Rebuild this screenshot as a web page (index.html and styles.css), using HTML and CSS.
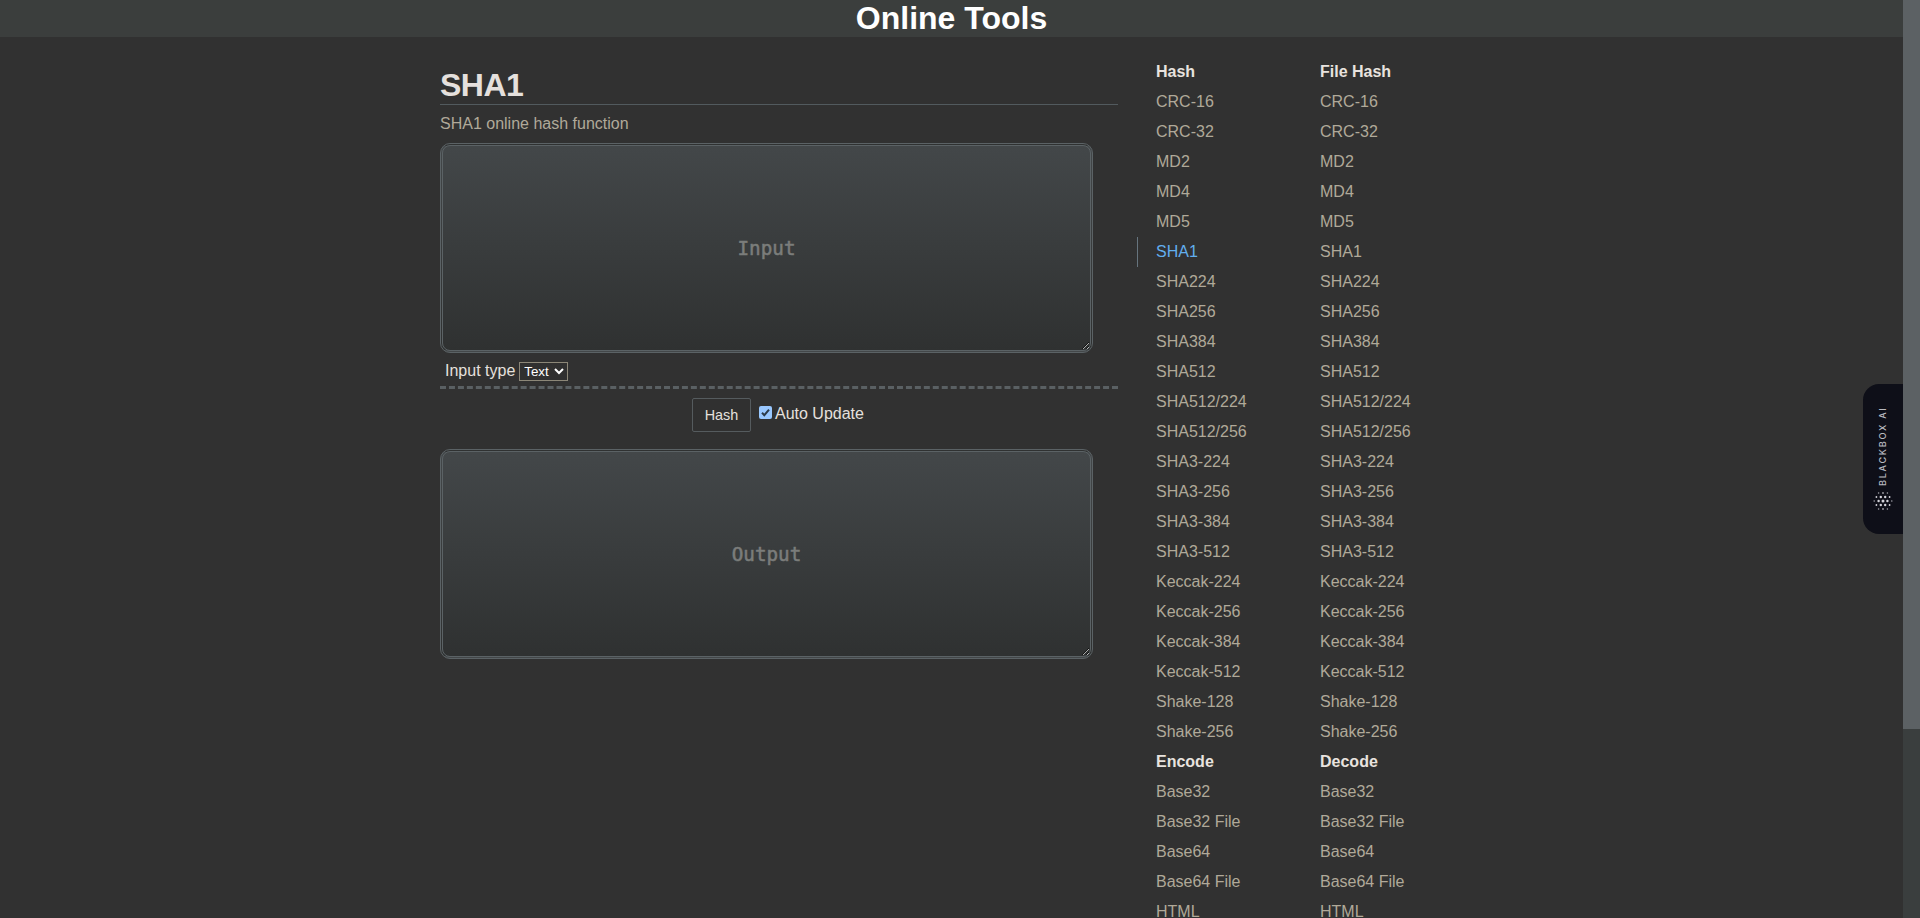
FILE: index.html
```html
<!DOCTYPE html>
<html lang="en">
<head>
<meta charset="utf-8">
<title>SHA1 - Online Tools</title>
<link rel="stylesheet" href="styles.css">
</head>
<body>
<div class="page">
  <div class="content">
    <header class="header">Online Tools</header>
    <div class="main">
      <main class="tool">
        <h1 class="title">SHA1</h1>
        <p class="description">SHA1 online hash function</p>
        <textarea class="box" placeholder="Input"></textarea>
        <div class="options">
          <label for="type">Input type</label>
          <select id="type" class="select"><option>Text</option><option>Hex</option></select>
        </div>
        <div class="actions">
          <button class="button">Hash</button>
          <label class="auto"><span class="check"><svg viewBox="0 0 13 13" width="13" height="13"><path d="M3 6.8 5.3 9.2 10 3.6" fill="none" stroke="#2b3a4a" stroke-width="2"/></svg></span>Auto Update</label>
        </div>
        <textarea class="box" placeholder="Output"></textarea>
      </main>
      <nav class="nav">
        <ul class="list">
          <li class="head">Hash</li><li>CRC-16</li><li>CRC-32</li><li>MD2</li><li>MD4</li><li>MD5</li><li class="active">SHA1</li><li>SHA224</li><li>SHA256</li><li>SHA384</li><li>SHA512</li><li>SHA512/224</li><li>SHA512/256</li><li>SHA3-224</li><li>SHA3-256</li><li>SHA3-384</li><li>SHA3-512</li><li>Keccak-224</li><li>Keccak-256</li><li>Keccak-384</li><li>Keccak-512</li><li>Shake-128</li><li>Shake-256</li>
          <li class="head">Encode</li><li>Base32</li><li>Base32 File</li><li>Base64</li><li>Base64 File</li><li>HTML</li>
        </ul>
        <ul class="list">
          <li class="head">File Hash</li><li>CRC-16</li><li>CRC-32</li><li>MD2</li><li>MD4</li><li>MD5</li><li>SHA1</li><li>SHA224</li><li>SHA256</li><li>SHA384</li><li>SHA512</li><li>SHA512/224</li><li>SHA512/256</li><li>SHA3-224</li><li>SHA3-256</li><li>SHA3-384</li><li>SHA3-512</li><li>Keccak-224</li><li>Keccak-256</li><li>Keccak-384</li><li>Keccak-512</li><li>Shake-128</li><li>Shake-256</li>
          <li class="head">Decode</li><li>Base32</li><li>Base32 File</li><li>Base64</li><li>Base64 File</li><li>HTML</li>
        </ul>
      </nav>
    </div>
    <aside class="blackbox">
      <span class="brand">BLACKBOX AI</span>
      <svg width="20" height="20" viewBox="0 0 20 20" fill="#d4d4da">
        <g opacity=".75"><circle cx="5.6" cy="2" r=".8"/><circle cx="10" cy="2" r=".9"/><circle cx="14.4" cy="2" r=".8"/><circle cx="5.6" cy="18" r=".8"/><circle cx="10" cy="18" r=".9"/><circle cx="14.4" cy="18" r=".8"/><circle cx="1.2" cy="10" r=".8"/><circle cx="18.8" cy="10" r=".8"/></g>
        <circle cx="3.4" cy="6" r=".9"/><circle cx="7.8" cy="6" r="1.2"/><circle cx="12.2" cy="6" r="1.2"/><circle cx="16.6" cy="6" r=".9"/>
        <circle cx="5.6" cy="10" r="1.2"/><circle cx="10" cy="10" r="1.5"/><circle cx="14.4" cy="10" r="1.2"/>
        <circle cx="3.4" cy="14" r=".9"/><circle cx="7.8" cy="14" r="1.2"/><circle cx="12.2" cy="14" r="1.2"/><circle cx="16.6" cy="14" r=".9"/>
      </svg>
    </aside>
  </div>
  <div class="scrollbar"><div class="thumb"></div></div>
</div>
</body>
</html>
```
FILE: styles.css
```css
* { box-sizing: border-box; }
body {
  margin: 0;
  background: #313131;
  color: #e5e0dd;
  font: 16px/18px "Liberation Sans", Arial, sans-serif;
  overflow: hidden;
}
.page { display: flex; height: 918px; overflow: hidden; }
.content { position: relative; width: 1903px; height: 918px; overflow: hidden; }
.header {
  height: 37px;
  background: #3b3e3d;
  color: #fff;
  font-size: 32px;
  font-weight: bold;
  line-height: 36px;
  text-align: center;
}
.main { display: flex; padding-left: 440px; }
.tool { width: 678px; padding-top: 29px; }
.title {
  height: 39px;
  margin: 0;
  border-bottom: 1px solid #525a5e;
  font-size: 32px;
  line-height: 38px;
  letter-spacing: -0.5px;
}
.description { height: 38px; margin: 0; padding-top: 10px; color: #b0a999; }
.box {
  display: block;
  width: 653px;
  height: 210px;
  margin: 0;
  padding: 0 10px;
  border: 3px double #5b6265;
  border-radius: 10px;
  background: linear-gradient(#434749, #2f3131);
  color: #e5e0dd;
  font: 19.3px/206px "DejaVu Sans Mono", monospace;
  text-align: center;
  overflow: hidden;
}
.box::placeholder { color: #7b7d7b; opacity: 1; -webkit-text-stroke: 0.5px #7b7d7b; }
.options {
  display: flex;
  gap: 4px;
  height: 36px;
  padding: 9px 5px 0;
  border-bottom: 3px dashed #5a6063;
}
.select {
  width: 49px;
  height: 19px;
  padding: 0;
  border: 1px solid #8c8778;
  border-radius: 0;
  background: #303030;
  color: #fff;
  font: 13.333px "Liberation Sans", Arial, sans-serif;
}
.actions { display: flex; gap: 8px; height: 60px; padding: 9px 0 0 252px; }
.button {
  width: 59px;
  height: 34px;
  padding: 0;
  border: 1px solid #555b5e;
  border-radius: 2px;
  background: #303030;
  color: #e5e0dd;
  font: 14.4px "Liberation Sans", Arial, sans-serif;
}
.auto { display: flex; gap: 3px; padding-top: 7px; }
.check { width: 13px; height: 13px; margin-top: 1px; border-radius: 2px; background: #99c8ff; }
.check svg { display: block; }
.nav { display: flex; padding: 20px 0 0 19px; }
.list { width: 164px; margin: 0; padding: 0; list-style: none; color: #b0a999; }
.list li { height: 30px; padding-left: 18px; border-left: 1px solid transparent; line-height: 30px; }
.list .head { color: #e8e3df; font-weight: bold; }
.list .active { color: #62aeee; border-left-color: #66747e; }
.blackbox {
  position: absolute;
  top: 384px;
  right: 0;
  display: flex;
  flex-direction: column;
  align-items: center;
  gap: 5px;
  width: 40px;
  height: 150px;
  padding-top: 22px;
  border-radius: 16px 0 0 16px;
  background: #0e0f18;
}
.brand {
  height: 80px;
  color: #b9bac0;
  font: 500 9px/12px Inter, sans-serif;
  letter-spacing: 1.8px;
  white-space: nowrap;
  writing-mode: vertical-rl;
  transform: rotate(180deg);
}
.scrollbar { width: 17px; height: 918px; background: #3a3e3e; }
.thumb { height: 729px; background: #5c6164; }
```
